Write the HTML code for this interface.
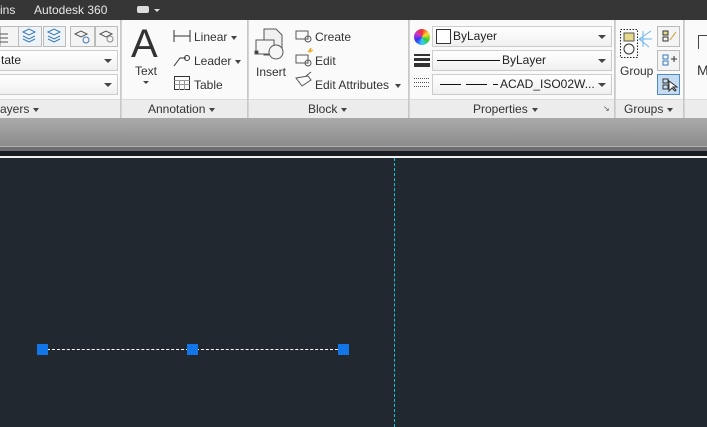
<!DOCTYPE html><html><head><style>
*{margin:0;padding:0;box-sizing:border-box}
body{width:707px;height:427px;overflow:hidden;background:#212830;font-family:"Liberation Sans",sans-serif;font-size:12px;color:#222;position:relative}
.a{position:absolute}
.top{left:0;top:0;width:707px;height:20px;background:#363636;color:#e8e8e8;font-size:12px}
.rib{left:0;top:20px;width:707px;height:80px;background:#fafafa}
.tb{left:0;top:99px;width:707px;height:19px;background:#ececec;border-top:1px solid #dcdcdc;color:#333;font-size:12px}
.sep{top:20px;width:2px;height:98px;background:#d4d4d4;border-left:1px solid #c8c8c8}
.dd{height:21px;border:1px solid #ccc;background:linear-gradient(#fff,#f0f0f0);font-size:12px;line-height:19px}
.arr{position:absolute;right:5px;top:8px;width:0;height:0;border-left:4px solid transparent;border-right:4px solid transparent;border-top:4px solid #444}
.t{font-size:12px;color:#333}
.ico{border:1px solid #bbb;background:#f4f4f4}
.tri{display:inline-block;width:0;height:0;border-left:3px solid transparent;border-right:3px solid transparent;border-top:4px solid #444;vertical-align:middle;margin-left:4px}
</style></head><body>
<div class="a top"><span class="a" style="left:0;top:3px">ins</span><span class="a" style="left:34px;top:3px">Autodesk 360</span>
<div class="a" style="left:137px;top:6px;width:12px;height:7px;background:#ddd;border-radius:2px"></div><div class="a" style="left:154px;top:9px;border-left:3px solid transparent;border-right:3px solid transparent;border-top:3px solid #ddd"></div></div>
<div class="a rib"></div>
<div class="a tb"></div>
<div class="a" style="left:0;top:118px;width:707px;height:28px;background:linear-gradient(#aaa,#8c8c8c)"></div>
<div class="a" style="left:0;top:146px;width:707px;height:5px;background:#6d6d6d;border-top:1px solid #b0b0b0"></div>
<div class="a" style="left:0;top:151px;width:707px;height:5px;background:#1a1d22"></div>
<div class="a" style="left:0;top:156px;width:707px;height:2px;background:#f0f0f0"></div>
<div class="a sep" style="left:120px"></div><div class="a sep" style="left:247px"></div><div class="a sep" style="left:408px"></div><div class="a sep" style="left:614px"></div><div class="a sep" style="left:683px"></div>
<div class="a ico" style="left:0;top:26px;width:20px;height:21px"></div>
<div class="a ico" style="left:18px;top:26px;width:24px;height:21px;background:#eef3f8"></div>
<div class="a ico" style="left:43px;top:26px;width:23px;height:21px;background:#eef3f8"></div>
<div class="a ico" style="left:70px;top:26px;width:25px;height:21px"></div>
<div class="a ico" style="left:95px;top:26px;width:23px;height:21px"></div>
<svg class="a" style="left:0;top:26px" width="120" height="22"><g fill="none" stroke="#555" stroke-width="1"><path d="M0 8h8M0 12h8M0 16h8"/><path d="M23 6l6-3 6 3-6 3zM23 10l6 3 6-3M23 13l6 3 6-3" stroke="#3a7ab8"/><path d="M48 6l6-3 6 3-6 3zM48 10l6 3 6-3M48 13l6 3 6-3" stroke="#3a7ab8"/><path d="M75 8l6-3 6 3-6 3z"/><circle cx="86" cy="14" r="3" stroke="#3a7ab8"/><path d="M100 8l6-3 6 3-6 3z"/><circle cx="110" cy="13" r="3" stroke="#888"/></g></svg>
<div class="a dd" style="left:-2px;top:50px;width:120px"><span style="margin-left:2px">tate</span><i class="arr"></i></div>
<div class="a dd" style="left:-2px;top:74px;width:120px"><i class="arr"></i></div>
<div class="a t" style="left:0;top:102px">ayers<span class="tri"></span></div>
<div class="a" style="left:131px;top:22px;font-size:40px;color:#333">A</div>
<div class="a t" style="left:135px;top:64px">Text</div>
<div class="a" style="left:143px;top:81px;border-left:3px solid transparent;border-right:3px solid transparent;border-top:3px solid #444"></div>
<svg class="a" style="left:172px;top:28px" width="20" height="64"><g fill="none" stroke="#333"><path d="M2 2v12M18 2v12M2 8h16"/><path d="M2 38l6-8 6 0"/><circle cx="15" cy="30" r="2.5"/><rect x="2.5" y="48.5" width="15" height="13"/><path d="M2.5 52.5h15M2.5 56.5h15M7.5 52v10M12.5 52v10" stroke="#999"/></g></svg>
<div class="a t" style="left:194px;top:30px">Linear<span class="tri"></span></div>
<div class="a t" style="left:194px;top:54px">Leader<span class="tri"></span></div>
<div class="a t" style="left:194px;top:78px">Table</div>
<div class="a t" style="left:148px;top:102px">Annotation<span class="tri"></span></div>
<svg class="a" style="left:254px;top:28px" width="36" height="34"><g fill="none" stroke="#555"><path d="M10 1h12l6 6v20H10z" fill="#f0f0f0"/><rect x="2" y="12" width="18" height="14" fill="#f6f6f6"/><circle cx="22" cy="24" r="7" fill="#f6f6f6"/><rect x="1" y="23" width="3" height="3" fill="#333"/></g></svg>
<div class="a t" style="left:256px;top:65px">Insert</div>
<svg class="a" style="left:294px;top:28px" width="20" height="64"><g fill="none" stroke="#555"><rect x="2" y="3" width="12" height="8"/><circle cx="14" cy="11" r="3"/><rect x="2" y="27" width="12" height="8"/><circle cx="14" cy="35" r="3"/><path d="M14 24l3-4-1 4 3-2" stroke="#e8a000"/><path d="M2 50l6 8 9-6-3-4zM12 48l5-4" /></g></svg>
<div class="a t" style="left:315px;top:30px">Create</div>
<div class="a t" style="left:315px;top:54px">Edit</div>
<div class="a t" style="left:315px;top:78px">Edit Attributes<span class="tri" style="margin-left:6px"></span></div>
<div class="a t" style="left:308px;top:102px">Block<span class="tri"></span></div>
<div class="a" style="left:414px;top:29px;width:16px;height:16px;border-radius:50%;background:conic-gradient(#e33,#fd3,#3c3,#3cf,#33e,#c3c,#e33)"></div>
<svg class="a" style="left:413px;top:53px" width="18" height="40"><g fill="#333"><rect x="1" y="1" width="16" height="2"/><rect x="1" y="5" width="16" height="3"/><rect x="1" y="10" width="16" height="4"/></g><g stroke="#555" stroke-dasharray="1 1"><path d="M1 25.5h16M1 29.5h16M1 33.5h16"/></g></svg>
<div class="a dd" style="left:432px;top:26px;width:180px"><span class="a" style="left:3px;top:2px;width:15px;height:15px;border:1px solid #333;background:#fff"></span><span style="margin-left:20px">ByLayer</span><i class="arr"></i></div>
<div class="a dd" style="left:432px;top:50px;width:180px"><span class="a" style="left:4px;top:9px;width:63px;border-top:1px solid #111"></span><span style="margin-left:69px">ByLayer</span><i class="arr"></i></div>
<div class="a dd" style="left:432px;top:74px;width:180px"><svg class="a" style="left:6px;top:8px" width="60" height="3"><path d="M1 1.5h21M27 1.5h21M54 1.5h5" stroke="#111"/></svg><span style="margin-left:67px">ACAD_ISO02W...</span><i class="arr"></i></div>
<div class="a t" style="left:473px;top:102px">Properties<span class="tri"></span></div>
<div class="a" style="left:603px;top:104px;font-size:8px;color:#555">↘</div>
<svg class="a" style="left:619px;top:27px" width="34" height="34"><rect x="1.5" y="2.5" width="17" height="28" fill="none" stroke="#222" stroke-dasharray="1.5 1.5"/><rect x="5" y="6" width="10" height="8" fill="#e6d98a" stroke="#555"/><circle cx="10" cy="22" r="5" fill="none" stroke="#333"/><path d="M20 12l12-8M20 12l13 0M20 12l10 8M24 4v16" stroke="#6ab6ee"/></svg>
<div class="a t" style="left:620px;top:64px">Group</div>
<div class="a ico" style="left:657px;top:26px;width:23px;height:21px"></div>
<div class="a ico" style="left:657px;top:50px;width:23px;height:21px"></div>
<div class="a" style="left:657px;top:74px;width:23px;height:21px;background:#c5dcf2;border:1px solid #4d88c7"></div>
<svg class="a" style="left:657px;top:26px" width="24" height="70"><g fill="none" stroke="#333"><rect x="6" y="5" width="5" height="4" fill="#e6d98a"/><rect x="6" y="11" width="5" height="4"/><path d="M13 14l6-8" stroke="#c93"/><rect x="6" y="29" width="5" height="4" stroke="#3a7ab8"/><rect x="6" y="35" width="5" height="4" stroke="#3a7ab8"/><path d="M14 33h6M17 30v6"/><rect x="6" y="53" width="5" height="4"/><rect x="6" y="59" width="5" height="4"/><path d="M12 55v10l3-3 3 3 1-1-3-3h4z" fill="#fff"/></g></svg>
<div class="a t" style="left:624px;top:102px">Groups<span class="tri"></span></div>
<div class="a t" style="left:697px;top:62px;font-size:14px">M</div>
<div class="a" style="left:698px;top:35px;width:9px;height:14px;border-left:1px solid #444;border-top:1px solid #444"></div>
<div class="a" style="left:394px;top:158px;width:0;height:269px;border-left:1px dashed #19c4d2"></div>
<div class="a" style="left:42px;top:349px;width:301px;height:0;border-top:1px dashed #fff"></div>
<div class="a" style="left:37px;top:344px;width:11px;height:11px;background:#1276e8"></div>
<div class="a" style="left:187px;top:344px;width:11px;height:11px;background:#1276e8"></div>
<div class="a" style="left:338px;top:344px;width:11px;height:11px;background:#1276e8"></div>
</body></html>
